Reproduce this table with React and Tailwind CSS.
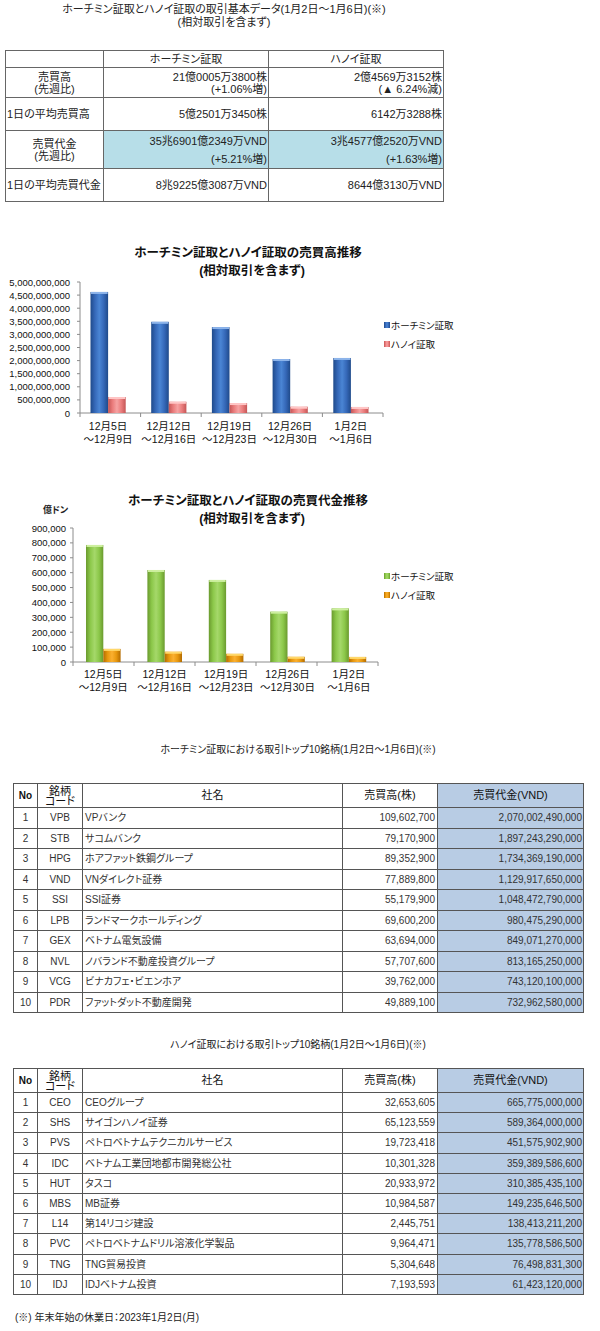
import React from 'react';

const FONT = "font-['Liberation_Sans','Noto_Sans_CJK_JP',sans-serif] [font-feature-settings:'palt']";

const basicRows = [
    { label: ['売買高', '(先週比)'], hcm: ['21億0005万3800株', '(+1.06%増)'], hnx: ['2億4569万3152株', '(▲ 6.24%減)'], h: 'h-[30px]' },
    { label: '1日の平均売買高', hcm: '5億2501万3450株', hnx: '6142万3288株', h: 'h-[33px]' },
    { label: ['売買代金', '(先週比)'], hcm: ['35兆6901億2349万VND', '(+5.21%増)'], hnx: ['3兆4577億2520万VND', '(+1.63%増)'], h: 'h-[38px]', blue: true },
    { label: '1日の平均売買代金', hcm: '8兆9225億3087万VND', hnx: '8644億3130万VND', h: 'h-[33px]' },
];

const hoseTop = [
    ['VPB', 'VPバンク', '109,602,700', '2,070,002,490,000'],
    ['STB', 'サコムバンク', '79,170,900', '1,897,243,290,000'],
    ['HPG', 'ホアファット鉄鋼グループ', '89,352,900', '1,734,369,190,000'],
    ['VND', 'VNダイレクト証券', '77,889,800', '1,129,917,650,000'],
    ['SSI', 'SSI証券', '55,179,900', '1,048,472,790,000'],
    ['LPB', 'ランドマークホールディング', '69,600,200', '980,475,290,000'],
    ['GEX', 'ベトナム電気設備', '63,694,000', '849,071,270,000'],
    ['NVL', 'ノバランド不動産投資グループ', '57,707,600', '813,165,250,000'],
    ['VCG', 'ビナカフェ・ビエンホア', '39,762,000', '743,120,100,000'],
    ['PDR', 'ファットダット不動産開発', '49,889,100', '732,962,580,000'],
];

const hnxTop = [
    ['CEO', 'CEOグループ', '32,653,605', '665,775,000,000'],
    ['SHS', 'サイゴンハノイ証券', '65,123,559', '589,364,000,000'],
    ['PVS', 'ペトロベトナムテクニカルサービス', '19,723,418', '451,575,902,900'],
    ['IDC', 'ベトナム工業団地都市開発総公社', '10,301,328', '359,389,586,600'],
    ['HUT', 'タスコ', '20,933,972', '310,385,435,100'],
    ['MBS', 'MB証券', '10,984,587', '149,235,646,500'],
    ['L14', '第14リコジ建設', '2,445,751', '138,413,211,200'],
    ['PVC', 'ペトロベトナムドリル溶液化学製品', '9,964,471', '135,778,586,500'],
    ['TNG', 'TNG貿易投資', '5,304,648', '76,498,831,300'],
    ['IDJ', 'IDJベトナム投資', '7,193,593', '61,423,120,000'],
];

const cats = [['12月5日', '～12月9日'], ['12月12日', '～12月16日'], ['12月19日', '～12月23日'], ['12月26日', '～12月30日'], ['1月2日', '～1月6日']];

const gradients = {
    blue: ['#1f4a8a', '#3568b8', '#4a85d4', '#3568b8', '#1f4a8a'],
    pink: ['#c45656', '#ea7c7c', '#f6a3a3', '#ea7c7c', '#c45656'],
    green: ['#6a9a2e', '#8cc84a', '#a5d86a', '#8cc84a', '#6a9a2e'],
    orange: ['#b36b00', '#e8980e', '#fbb030', '#e8980e', '#b36b00'],
};
const caps = { blue: '#8db4ea', pink: '#ffc6c6', green: '#cdef9f', orange: '#ffd86a' };

const Defs = () => (
    <defs>
        {Object.entries(gradients).map(([k, stops]) => (
            <linearGradient key={k} id={`g-${k}`} x1="0" x2="1" y1="0" y2="0">
                {stops.map((c, i) => <stop key={i} offset={i / (stops.length - 1)} stopColor={c} />)}
            </linearGradient>
        ))}
    </defs>
);

const Bar = ({ x, base, h, w, kind }) => (
    <g>
        <rect x={x} y={base - h} width={w} height={h} fill={`url(#g-${kind})`} />
        <rect x={x + 0.5} y={base - h} width={w - 1} height={2} fill={caps[kind]} />
    </g>
);

// generic chart; all coords are inside the svg
const Chart = ({ h, title, unit, axisX, axisRight, top, base, labels, labelX, series, max, barStart, step, barW, legendY, catY }) => {
    const scale = (base - top) / max;
    return (
        <svg width="480" height={h} className="block" style={{ fontFamily: "'Liberation Sans','Noto Sans CJK JP',sans-serif" }}>
            <Defs />
            <text x="248" y={title.y} textAnchor="middle" fontSize="12.5" fontWeight="bold" fill="#111">{title.l1}</text>
            <text x="252" y={title.y + 18} textAnchor="middle" fontSize="12.5" fontWeight="bold" fill="#111">(相対取引を含まず)</text>
            {unit && <text x="43" y={unit} fontSize="9" fontWeight="bold" fill="#222">億ドン</text>}

            {labels.map((l, i) => {
                const y = base - (i * (base - top)) / (labels.length - 1);
                return (
                    <g key={l}>
                        <text x={labelX} y={y + 3.5} textAnchor="end" fontSize="9.5" fill="#111">{l}</text>
                        <line x1={axisX - 3} x2={axisX} y1={y} y2={y} stroke="#8c8c8c" />
                    </g>
                );
            })}
            <line x1={axisX} x2={axisX} y1={top} y2={base} stroke="#8c8c8c" />
            <line x1={axisX} x2={axisRight} y1={base} y2={base} stroke="#8c8c8c" />
            {[0, 1, 2, 3, 4, 5].map(i => {
                const x = axisX + ((axisRight - axisX) * i) / 5;
                return <line key={i} x1={x} x2={x} y1={base} y2={base + 4} stroke="#8c8c8c" />;
            })}

            {cats.map((c, i) => {
                const x = barStart + step * i;
                return (
                    <g key={i}>
                        <Bar x={x} base={base} h={series[0].data[i] * scale} w={barW} kind={series[0].kind} />
                        <Bar x={x + barW} base={base} h={series[1].data[i] * scale} w={barW} kind={series[1].kind} />
                        <text x={x + barW} y={catY} textAnchor="middle" fontSize="10.5" fill="#111">{c[0]}</text>
                        <text x={x + barW} y={catY + 13} textAnchor="middle" fontSize="10.5" fill="#111">{c[1]}</text>
                    </g>
                );
            })}

            {series.map((s, i) => (
                <g key={s.name}>
                    <rect x="384" y={legendY[i] - 3} width="6" height="6" fill={`url(#g-${s.kind})`} />
                    <text x="391" y={legendY[i] + 3.5} fontSize="9.5" fill="#111">{s.name}</text>
                </g>
            ))}
        </svg>
    );
};

const TopTable = ({ rows, rowH }) => (
    <table className="w-[570px] table-fixed border-collapse border border-[#555] text-[10px] text-[#333]">
        <colgroup>
            <col className="w-[24px]" />
            <col className="w-[45px]" />
            <col className="w-[260px]" />
            <col className="w-[95px]" />
            <col className="w-[146px]" />
        </colgroup>
        <thead>
            <tr className="h-[24px] text-[#111]">
                <th className="border border-[#555] font-bold">No</th>
                <th className="border border-[#555] font-normal leading-[10px] text-[11px]">銘柄<br />コード</th>
                <th className="border border-[#555] font-normal text-[11px]">社名</th>
                <th className="border border-[#555] font-normal text-[11px]">売買高(株)</th>
                <th className="border border-[#555] bg-[#b8cce4] font-normal text-[11px]">売買代金(VND)</th>
            </tr>
        </thead>
        <tbody>
            {rows.map((r, i) => (
                <tr key={r[0]} className={rowH}>
                    <td className="border border-[#555] text-center">{i + 1}</td>
                    <td className="border border-[#555] text-center">{r[0]}</td>
                    <td className="border border-[#555] pl-[2px]">{r[1]}</td>
                    <td className="border border-[#555] pr-[2px] text-right">{r[2]}</td>
                    <td className="border border-[#555] bg-[#b8cce4] pr-[1px] text-right">{r[3]}</td>
                </tr>
            ))}
        </tbody>
    </table>
);

const Lines = ({ v, gap }) => Array.isArray(v)
    ? <div className={`flex flex-col ${gap}`}>{v.map(t => <span key={t}>{t}</span>)}</div>
    : <span>{v}</span>;

export default function App() {
    return (
        <div className={`w-[600px] min-h-[1331px] bg-white pt-[3px] text-[#222] ${FONT}`}>
            {/* basic data */}
            <div className="ml-[5px] w-[438px] text-center text-[11px] leading-[13px]">
                <div>ホーチミン証取とハノイ証取の取引基本データ(1月2日～1月6日)(※)</div>
                <div>(相対取引を含まず)</div>
            </div>
            <table className="mt-[21px] ml-[5px] w-[438px] table-fixed border-collapse border border-[#666] text-[11px] leading-[12px]">
                <colgroup>
                    <col className="w-[98px]" />
                    <col className="w-[165px]" />
                    <col className="w-[175px]" />
                </colgroup>
                <thead>
                    <tr className="h-[17px]">
                        <th className="border border-[#666]"></th>
                        <th className="border border-[#666] font-normal">ホーチミン証取</th>
                        <th className="border border-[#666] font-normal">ハノイ証取</th>
                    </tr>
                </thead>
                <tbody>
                    {basicRows.map(r => (
                        <tr key={r.hcm} className={r.h}>
                            <td className={`border border-[#666] ${Array.isArray(r.label) ? 'text-center' : 'pl-[1px]'}`}>
                                <Lines v={r.label} gap="gap-0" />
                            </td>
                            <td className={`border border-[#666] pr-[1px] text-right ${r.blue ? 'bg-[#b7dee8]' : ''}`}>
                                <Lines v={r.hcm} gap={r.blue ? 'gap-[6px]' : 'gap-0'} />
                            </td>
                            <td className={`border border-[#666] pr-[1px] text-right ${r.blue ? 'bg-[#b7dee8]' : ''}`}>
                                <Lines v={r.hnx} gap={r.blue ? 'gap-[6px]' : 'gap-0'} />
                            </td>
                        </tr>
                    ))}
                </tbody>
            </table>

            {/* volume chart */}
            <div className="mt-[28px]">
                <Chart
                    h={230}
                    title={{ y: 27, l1: 'ホーチミン証取とハノイ証取の売買高推移' }}
                    axisX={80} axisRight={383} top={52} base={183}
                    labels={['0', '500,000,000', '1,000,000,000', '1,500,000,000', '2,000,000,000', '2,500,000,000', '3,000,000,000', '3,500,000,000', '4,000,000,000', '4,500,000,000', '5,000,000,000']}
                    labelX={70} max={5000}
                    series={[
                        { name: 'ホーチミン証取', kind: 'blue', data: [4620, 3480, 3280, 2060, 2100] },
                        { name: 'ハノイ証取', kind: 'pink', data: [610, 430, 380, 240, 230] },
                    ]}
                    barStart={90.5} step={60.7} barW={17.6}
                    legendY={[95, 114]} catY={200}
                />
            </div>

            {/* value chart */}
            <div className="mt-[10px]">
                <Chart
                    h={240}
                    title={{ y: 35, l1: 'ホーチミン証取とハノイ証取の売買代金推移' }}
                    unit={43}
                    axisX={73} axisRight={378} top={58} base={192}
                    labels={['0', '100,000', '200,000', '300,000', '400,000', '500,000', '600,000', '700,000', '800,000', '900,000']}
                    labelX={66} max={900}
                    series={[
                        { name: 'ホーチミン証取', kind: 'green', data: [786, 618, 551, 338, 360] },
                        { name: 'ハノイ証取', kind: 'orange', data: [88, 69, 55, 35, 34] },
                    ]}
                    barStart={86} step={61.4} barW={17.3}
                    legendY={[106, 125]} catY={208}
                />
            </div>

            {/* HOSE top 10 */}
            <div className="mt-[33px] ml-[13px] w-[570px] text-center text-[10px] leading-[13px]">
                ホーチミン証取における取引トップ10銘柄(1月2日～1月6日)(※)
            </div>
            <div className="mt-[27px] ml-[13px]">
                <TopTable rows={hoseTop} rowH="h-[20.5px]" />
            </div>

            {/* HNX top 10 */}
            <div className="mt-[25px] ml-[13px] w-[570px] text-center text-[10px] leading-[13px]">
                ハノイ証取における取引トップ10銘柄(1月2日～1月6日)(※)
            </div>
            <div className="mt-[17px] ml-[13px]">
                <TopTable rows={hnxTop} rowH="h-[20.2px]" />
            </div>

            <div className="mt-[16px] ml-[15px] text-[10px] leading-[13px]">(※) 年末年始の休業日：2023年1月2日(月)</div>
        </div>
    );
}
